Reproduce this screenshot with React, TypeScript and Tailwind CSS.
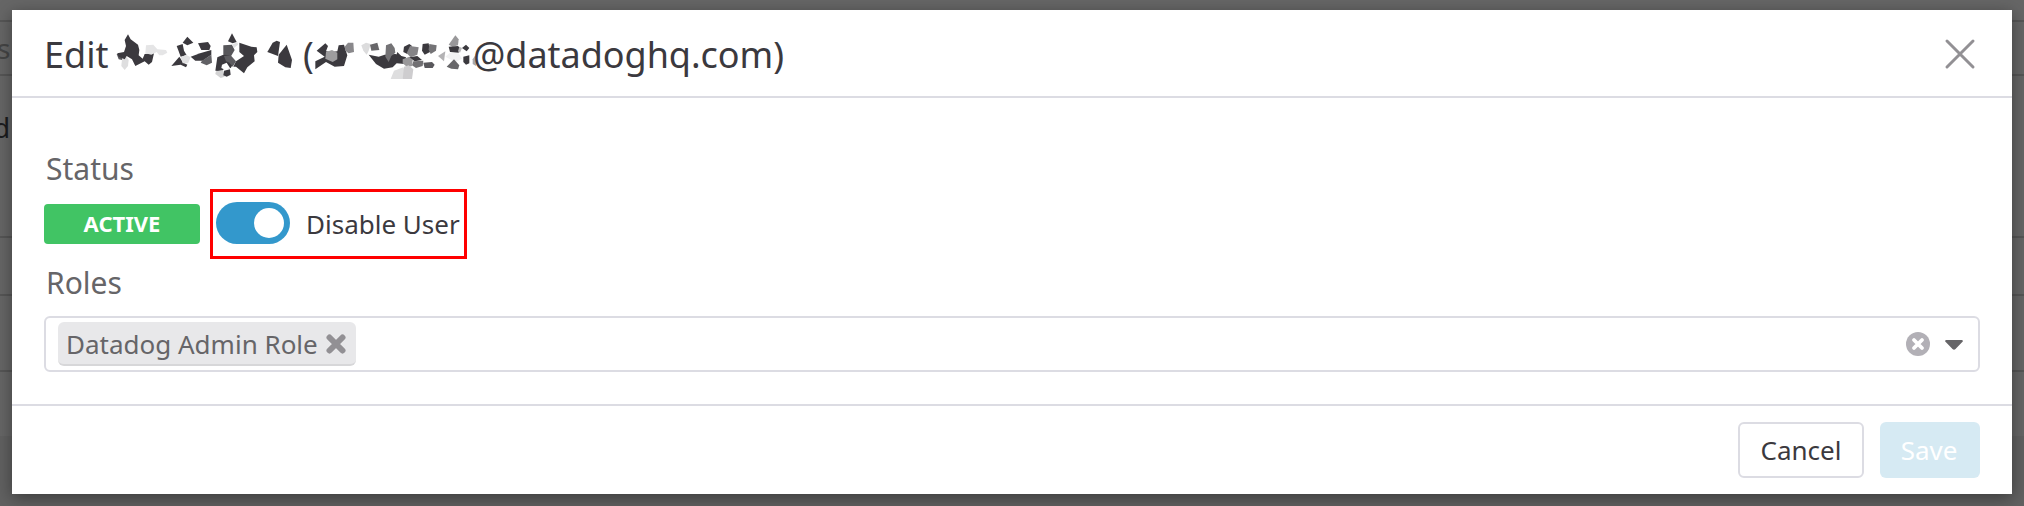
import React from "react";

type Shard = [points: string, fill: string];

const nameShards: Shard[] = [
  ["20,90 35,88 40,92 36,108 26,106", "#57565a"],
  ["36,106 50,98 56,108 54,126 44,138 34,126", "#dededf"],
  ["44,48 54,31 62,46 84,62 88,78 86,94 98,104 104,90 132,88 126,114 116,122 104,112 76,126 66,106 50,96 44,106 26,98 22,88 42,84 48,66", "#3b393e"],
  ["108,64 130,62 142,76 168,78 172,86 158,94 148,94 140,84 124,92 106,88", "#e5e5e6"],
  ["218,56 232,38 250,56 232,64", "#3b393e"],
  ["200,66 218,60 222,80 230,94 212,98 206,82", "#3b393e"],
  ["184,126 208,98 220,116 232,122 228,130 212,122", "#3b393e"],
  ["212,100 228,92 242,100 234,118 218,118", "#e0e0e1"],
  ["264,58 294,54 302,66 298,78 274,78", "#3b393e"],
  ["242,98 270,88 304,78 304,92 278,110 256,110", "#3b393e"],
  ["276,110 304,92 306,116 290,124 272,116", "#626165"],
  ["354,52 366,28 380,54 368,58", "#3b393e"],
  ["340,64 366,62 374,78 362,98 340,92", "#57565a"],
  ["366,62 382,54 384,62 372,72", "#e0e0e1"],
  ["322,100 340,92 358,94 374,114 362,132 342,134 336,142 316,140", "#3b393e"],
  ["342,96 362,94 378,112 368,128 358,116 348,112", "#5d5c60"],
  ["336,122 350,116 360,132 346,138 334,132", "#ffffff"],
  ["318,142 338,138 344,158 332,162 316,150", "#d2d2d3"],
  ["342,140 360,136 362,152 350,158 340,154", "#3b393e"],
  ["388,56 424,68 440,70 442,84 432,94 434,112 412,130 402,148 378,128 370,128 378,112 402,96 388,84", "#3b393e"],
  ["472,84 488,56 500,50 510,54 504,96 488,90", "#3b393e"],
  ["506,92 530,62 546,108 542,132 526,130 504,116", "#3b393e"],
];

const handleShards: Shard[] = [
  ["50,80 76,58 84,66 78,82 92,84 112,82 116,64 132,62 138,82 142,94 132,126 104,128 78,114 46,136 46,112 74,98", "#3b393e"],
  ["78,84 96,78 112,86 112,106 98,114 76,104", "#9d9c9e"],
  ["134,68 144,56 160,56 162,84 146,88 136,80", "#89888b"],
  ["184,64 198,56 212,60 206,80 200,92 190,80", "#dcdcdd"],
  ["210,62 232,56 238,78 214,80", "#68676a"],
  ["206,92 236,98 254,92 286,90 304,96 318,100 314,120 290,118 278,130 252,134 228,120", "#3b393e"],
  ["258,64 274,58 284,72 286,86 274,96 266,114 256,98", "#747376"],
  ["292,84 312,104 302,108 286,102", "#3b393e"],
  ["312,68 328,60 336,66 322,90 310,84", "#3b393e"],
  ["330,66 356,70 352,92 332,100 320,88", "#858487"],
  ["308,106 328,98 338,108 336,126 322,130 308,118", "#99989a"],
  ["328,100 352,96 366,108 344,112", "#3b393e"],
  ["340,112 370,110 368,126 348,132 336,124", "#717073"],
  ["368,60 386,58 390,84 374,92 366,80", "#3b393e"],
  ["388,60 410,64 408,80 392,90 386,76", "#747376"],
  ["370,116 396,114 404,122 398,132 374,132", "#59585c"],
  ["282,140 310,130 314,142 308,165 272,165", "#dededf"],
  ["312,128 326,124 340,136 336,165 308,165", "#cecdcf"],
  ["414,96 436,82 432,112", "#b3b2b4"],
  ["446,62 466,34 476,46 474,64 458,68", "#99989a"],
  ["446,68 474,66 480,72 476,86 450,84", "#3b393e"],
  ["478,68 486,72 480,86 474,82", "#b8b7b9"],
  ["436,98 450,86 476,88 486,104 466,114", "#f1f1f2"],
  ["440,128 462,106 478,124 474,136 454,134", "#68676a"],
  ["486,72 498,62 508,72 500,82", "#3b393e"],
  ["490,98 508,94 508,118 498,122 490,114", "#3b393e"],
  ["518,106 526,94 528,126 518,120", "#aaa9ab"],
];

function Shards({ shards, className, viewBox }: { shards: Shard[]; className: string; viewBox: string }) {
  return (
    <svg className={className} viewBox={viewBox} aria-hidden="true">
      {shards.map(([points, fill], i) => (
        <polygon key={i} points={points} fill={fill} />
      ))}
    </svg>
  );
}

function Backdrop() {
  return (
    <div className="flex h-full flex-col bg-[#666666] text-[28px] leading-none">
      <div className="h-[22px] shrink-0 border-b-2 border-[#565656]" />
      <div className="flex h-[54px] shrink-0 items-center border-b-2 border-[#565656] text-[#454545]">
        <span className="-ml-[3px]">s</span>
      </div>
      <div className="h-[162px] shrink-0 border-b-2 border-[#565656] pt-[37px] text-[#1c1c1e]">
        <span className="-ml-[7px] block">d</span>
      </div>
      <div className="h-[58px] shrink-0 border-b-2 border-[#565656]" />
      <div className="h-[76px] shrink-0 border-b-2 border-[#565656]" />
      <div className="h-16 shrink-0" />
      <div className="grow bg-[#616161]" />
    </div>
  );
}

function Header() {
  return (
    <header className="flex h-[88px] shrink-0 items-center justify-between border-b-2 border-[#dcdce3] pt-0.5 pr-9 pl-8">
      <h1 className="flex h-[86px] items-center text-[36px] leading-[86px] whitespace-pre text-[#3b393e]">
        <span className="mt-0.5 w-[66px]">Edit</span>
        <Shards shards={nameShards} className="h-15 w-[193px] shrink-0" viewBox="0 0 579 180" />
        <span className="mt-0.5 w-[11px]">(</span>
        <Shards shards={handleShards} className="h-15 w-[159px] shrink-0 overflow-visible" viewBox="42 0 477 180" />
        <span className="mt-0.5 tracking-[-0.04px]">@datadoghq.com)</span>
      </h1>
      <button aria-label="Close" className="flex size-8">
        <svg viewBox="0 0 32 32" className="size-8" fill="none" stroke="#929094" strokeWidth="3" strokeLinecap="round">
          <path d="M3 3 29 29M29 3 3 29" />
        </svg>
      </button>
    </header>
  );
}

export default function App() {
  return (
    <div className="relative h-[506px] w-[2024px] overflow-hidden font-['Noto_Sans',sans-serif]">
      <Backdrop />
      <div
        role="dialog"
        className="absolute top-2.5 left-3 flex h-[484px] w-[2000px] flex-col bg-white shadow-[0_4px_16px_rgba(0,0,0,0.4)]"
      >
        <Header />
        <main className="flex grow flex-col px-8">
          <div className="mt-[49px] ml-0.5 h-11 text-[30px] leading-[44px] text-[#666568]">Status</div>
          <div className="-mt-0.5 flex h-[70px] items-start">
            <span className="mt-[15px] flex h-10 w-[156px] items-center justify-center rounded bg-[#41c464] pb-0.5 text-[22px] font-bold text-white">
              ACTIVE
            </span>
            <label className="ml-2.5 flex h-[70px] w-[257px] items-start border-3 border-[#ff0000] pt-2.5 pl-[3px]">
              <span className="flex h-[42px] w-[74px] shrink-0 items-center justify-end rounded-full bg-[#3398cc] pr-1.5">
                <span className="size-[30px] rounded-full bg-white" />
              </span>
              <span className="ml-4 pt-1 text-[26px] leading-9 whitespace-nowrap text-[#3b393e]">Disable User</span>
            </label>
          </div>
          <div className="mt-0.5 ml-0.5 h-11 text-[30px] leading-[44px] text-[#666568]">Roles</div>
          <div className="mt-[11px] flex h-14 items-start rounded-md border-2 border-[#dcdce3] pt-1 pr-[15px] pl-3">
            <span className="flex h-11 w-[298px] items-center rounded-md border-b-2 border-[#d7d7d9] bg-[#e8e8ea] pt-0.5 pl-2 text-[26px] whitespace-nowrap text-[#666568]">
              <span className="w-[260px]">Datadog Admin Role</span>
              <svg viewBox="0 0 20 20" className="size-5 shrink-0" stroke="#929094" strokeWidth="6" strokeLinecap="round">
                <path d="M3.5 3.5 16.5 16.5M16.5 3.5 3.5 16.5" />
              </svg>
            </span>
            <span className="mt-1.5 ml-auto flex h-8 items-center">
              <svg viewBox="0 0 24 24" className="size-6" stroke="#ffffff" strokeWidth="3.8" strokeLinecap="round">
                <circle cx="12" cy="12" r="12" fill="#b2b0b6" stroke="none" />
                <path d="M8 8 16 16M16 8 8 16" />
              </svg>
              <svg viewBox="0 0 18 10" className="mt-0.5 ml-[15px] h-2.5 w-[18px]">
                <path d="M1 0H17Q18.500 .7 17.500 1.800L10.500 8.900Q9 10.500 7.500 8.900L.5 1.800Q-.5 .7 1 0Z" fill="#666568" />
              </svg>
            </span>
          </div>
        </main>
        <footer className="flex h-[90px] shrink-0 items-start justify-end gap-4 border-t-2 border-[#dcdce3] pt-4 pr-8 text-[26px]">
          <button className="h-14 w-[126px] rounded-md border-2 border-[#dcdce3] bg-white text-[#3b393e]">Cancel</button>
          <button className="h-14 w-[100px] rounded-md bg-[#d6eaf3] pr-0.5 text-white">Save</button>
        </footer>
      </div>
    </div>
  );
}
